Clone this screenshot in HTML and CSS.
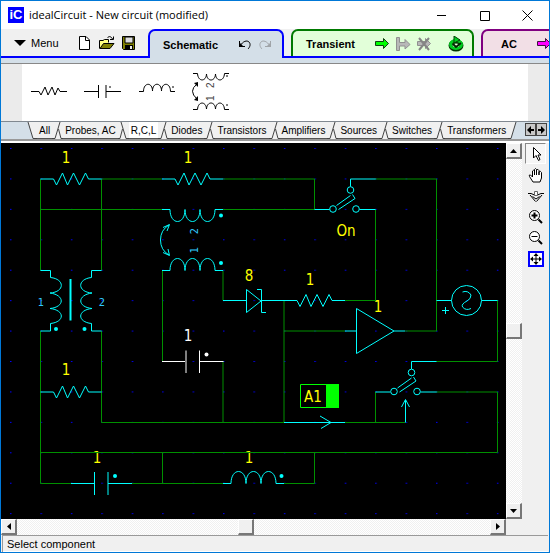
FILE: index.html
```html
<!DOCTYPE html>
<html lang="en">
<head>
<meta charset="utf-8">
<title>idealCircuit - New circuit (modified)</title>
<link rel="stylesheet" href="styles.css">
</head>
<body>
<svg class="defs" width="0" height="0" aria-hidden="true">
  <defs>
    <path id="resistor" d="M0 0H13L16 6L22 -6L27 6L33 -6L39 6L45 -6L48 0H61"/>
    <path id="coil-up" d="M0 0H8C8 -16 23 -16 23 0C23 -16 38 -16 38 0C38 -16 53 -16 53 0H61"/>
    <path id="coil-down" d="M0 0H8C8 16 23 16 23 0C23 16 38 16 38 0C38 16 53 16 53 0H61"/>
    <g id="switch">
      <path d="M0 0H15M45 0H61M36 -23V-30.500H61M22 -4L36 -14M24 0L40.500 -11L38 -15"/>
      <circle cx="18.500" cy="-.5" r="3.300"/><circle cx="36" cy="-19.500" r="3.300"/><circle cx="41.500" cy="-.5" r="3.300"/>
    </g>
  </defs>
</svg>
<div class="window">
  <header class="titlebar">
    <span class="logo">iC</span>
    <h1>idealCircuit - New circuit (modified)</h1>
    <div class="window-buttons">
      <button aria-label="Minimize"><svg width="11" height="11"><path d="M1 5.500H10" stroke="#000"/></svg></button>
      <button aria-label="Maximize"><svg width="11" height="11"><path d="M1.500 1.500H10.500V10.500H1.500Z" fill="none" stroke="#000"/></svg></button>
      <button aria-label="Close"><svg width="11" height="11"><path d="M.5 .5L10.500 10.500M10.500 .5L.5 10.500" stroke="#000"/></svg></button>
    </div>
  </header>

  <nav class="toolbar">
    <div class="file-tools">
      <button class="menu"><svg width="12" height="8"><path d="M0 1H12L6 7Z"/></svg>Menu</button>
      <button aria-label="New"><svg width="16" height="16"><path d="M2.500 1.500H9L12.500 5V14.500H2.500Z" fill="#fff" stroke="#000"/><path d="M8.500 1.500V5.500H12.500" fill="none" stroke="#000"/></svg></button>
      <button aria-label="Open"><svg width="16" height="16"><path d="M.5 13.500V5.500H4L5.500 4.500H9.500V7.500" fill="#ffff80" stroke="#000"/><path d="M1 13.500L4.500 8.500H15L11 13.500Z" fill="#808000" stroke="#000"/><path d="M8.500 3C9.500 1 12 1 13.500 4M14.500 1.500V4.500H11" fill="none" stroke="#000"/></svg></button>
      <button aria-label="Save"><svg width="16" height="16"><path d="M1.500 1.500H13.500V14.500H2.500L1.500 13.500Z" fill="#808000" stroke="#000"/><path d="M4 2H12V8H4Z" fill="#ddd" stroke="#000"/><path d="M4 10H12V14H4Z"/><path d="M9 11H11V14H9Z" fill="#eee"/></svg></button>
    </div>
    <section class="mode schematic">
      <button class="mode-name">Schematic</button>
      <button aria-label="Undo"><svg width="14" height="14"><path d="M1.500 3V8.500H7M2 8C5 3 9 2 11 4C13 6 12 9 10 11" fill="none" stroke="#000"/><path d="M1 4V9H6Z"/></svg></button>
      <button aria-label="Redo"><svg width="14" height="14"><path d="M12.500 3V8.500H7M12 8C9 3 5 2 3 4C1 6 2 9 4 11" fill="none" stroke="#a0a4a8"/><path d="M13 4V9H8Z" fill="#a0a4a8"/></svg></button>
    </section>
    <section class="mode transient">
      <button class="mode-name">Transient</button>
      <button aria-label="Run"><svg width="16" height="16"><path d="M1.500 5.500H9.500V2.500L14.500 7.500L9.500 12.500V9.500H1.500Z" fill="#0f0" stroke="#104010"/></svg></button>
      <button aria-label="Continue"><svg width="16" height="16"><path d="M1.500 1.500H4.500V6.500H10V3.500L15 8.500L10 13V10H4.500V14.500H1.500Z" fill="#b8b8b8" stroke="#909090"/></svg></button>
      <button aria-label="Stop"><svg width="16" height="16"><path d="M1.500 5.500H9.500V2.500L14.500 7.500L9.500 12.500V9.500H1.500Z" fill="#b8b8b8" stroke="#909090"/><path d="M3 2L13 14M13 2L3 14" stroke="#858585" stroke-width="2"/></svg></button>
      <button class="refresh" aria-label="Restart"><svg width="16" height="16"><ellipse cx="8" cy="9.500" rx="5.500" ry="4" fill="none" stroke="#003800" stroke-width="4"/><ellipse cx="8" cy="8.500" rx="5.500" ry="4" fill="none" stroke="#00d020" stroke-width="3"/><path d="M6 0L12 4L6 7Z" fill="#00d020" stroke="#004000"/><path d="M5 8L8 11L13 7" fill="none" stroke="#002800" stroke-width="2"/></svg></button>
    </section>
    <section class="mode ac">
      <button class="mode-name">AC</button>
      <button aria-label="Run AC"><svg width="16" height="16"><path d="M1.500 5.500H9.500V2.500L14.500 7.500L9.500 12.500V9.500H1.500Z" fill="#f0f" stroke="#401040"/></svg></button>
    </section>
  </nav>

  <div class="palette">
    <div class="parts">
      <button aria-label="Resistor"><svg width="38" height="44"><path d="M1 23.500H9L11 27L15 19L18 27L22 19L25 27L28 20L30 23.500H37"/></svg></button>
      <button aria-label="Capacitor"><svg width="38" height="44"><path d="M0 23.500H14.500M22 23.500H37M14.500 17V30M22 17V30"/><circle class="pin" cx="26" cy="19" r="1"/></svg></button>
      <button aria-label="Inductor"><svg width="38" height="44"><path d="M1 23.500H5.500C5.500 14 14.500 14 14.500 23C14.500 14 23.500 14 23.500 23C23.500 14 32.500 14 32.500 23.500H37"/><circle class="pin" cx="35" cy="19" r="1"/></svg></button>
      <button aria-label="Coupled inductors"><svg width="38" height="44"><path d="M1 5.500H5.500C6 14 14 14 14.500 6C15 14 23 14 23.500 6C24 14 32 14 32.500 5.500H37M1 41.500H5.500C6 33 14 33 14.500 41C15 33 23 33 23.500 41C24 33 32 33 32.500 41.500H37M5 16Q-4 23 5 31"/><path class="solid" d="M6 14V19L2 15ZM6 33V28L2 32Z"/><circle class="pin" cx="35" cy="8" r="1"/><circle class="pin" cx="35" cy="37" r="1"/><text x="-20" y="22" transform="rotate(-90)">2</text><text x="-33" y="22" transform="rotate(-90)">1</text></svg></button>
    </div>
  </div>

  <div class="categories">
    <svg class="edge" width="11" height="17"><path d="M2 0H11V16H7Z"/><path class="line" d="M2 0L7 16.500H11"/></svg>
    <button>All</button>
    <svg class="edge" width="11" height="17"><path d="M0 0H11V17H0Z"/><path class="line" d="M0 16.500H3L8 0M6.500 7L9 16.500H11"/></svg>
    <button>Probes, AC</button>
    <svg class="edge" width="11" height="17"><path d="M0 0H11V17H0Z"/><path class="line" d="M0 16.500H2L4.500 7M3 0L8 16.500H11"/></svg>
    <button class="current">R,C,L</button>
    <svg class="edge" width="11" height="17"><path d="M0 0H11V17H0Z"/><path class="line" d="M0 16.500H3L8 0M6.500 7L9 16.500H11"/></svg>
    <button>Diodes</button>
    <svg class="edge" width="11" height="17"><path d="M0 0H11V17H0Z"/><path class="line" d="M0 16.500H3L8 0M6.500 7L9 16.500H11"/></svg>
    <button>Transistors</button>
    <svg class="edge" width="11" height="17"><path d="M0 0H11V17H0Z"/><path class="line" d="M0 16.500H3L8 0M6.500 7L9 16.500H11"/></svg>
    <button>Amplifiers</button>
    <svg class="edge" width="11" height="17"><path d="M0 0H11V17H0Z"/><path class="line" d="M0 16.500H3L8 0M6.500 7L9 16.500H11"/></svg>
    <button>Sources</button>
    <svg class="edge" width="11" height="17"><path d="M0 0H11V17H0Z"/><path class="line" d="M0 16.500H3L8 0M6.500 7L9 16.500H11"/></svg>
    <button>Switches</button>
    <svg class="edge" width="11" height="17"><path d="M0 0H11V17H0Z"/><path class="line" d="M0 16.500H3L8 0M6.500 7L9 16.500H11"/></svg>
    <button>Transformers</button>
    <svg class="edge" width="11" height="17"><path d="M0 0H8L3 16H0Z"/><path class="line" d="M0 16.500H3L8 0"/></svg>
    <div class="pager">
      <button aria-label="Previous"><svg width="7" height="8"><path d="M0 4L4 0V3H7V5H4V8Z"/></svg></button>
      <button aria-label="Next"><svg width="7" height="8"><path d="M7 4L3 0V3H0V5H3V8Z"/></svg></button>
    </div>
  </div>

  <main class="workspace">
    <svg class="canvas" role="img" aria-label="Circuit">
      <defs>
        <pattern id="grid" x="9" y="5" width="30.430" height="30.430" patternUnits="userSpaceOnUse"><rect width="1.500" height="1" fill="#0000ff"/></pattern>
      </defs>
      <rect width="100%" height="100%" fill="#000"/>
      <rect width="100%" height="100%" fill="url(#grid)"/>
      <g transform="translate(-1 -143)">
        <g class="values">
          <text x="66" y="163">1</text>
          <text x="188" y="163">1</text>
          <text x="249" y="281">8</text>
          <text x="310" y="285">1</text>
          <text x="346" y="236">On</text>
          <text x="378" y="312">1</text>
          <text x="66" y="375">1</text>
          <text x="97" y="463">1</text>
          <text x="249" y="463">1</text>
          <text x="188" y="341" class="picked">1</text>
          <text x="313" y="402">A1</text>
        </g>
        <path class="wire" d="M40.500 179V270.500M101.500 179H162M101.500 179V270.500M40.500 209.500H162M223 179H314.500V209.500H223M375 179H436.500V331H405M375.500 209.500V300.500H345M284 300.500V422.500M284 331H345M162.500 270.500V361.500M223 270.500V300.500M223 361.500V422.500M40.500 331V483.500H71M101.500 331V422.500H284M345 422.500H405M375.500 392V422.500M497.500 300V361.500H436M436 392H497.500V452.500H40.500M162.500 452.500V483.500M132 483.500H223M314.500 452.500V483.500H284"/>
        <g class="part">
          <use href="#resistor" x="40.500" y="179"/>
          <use href="#resistor" x="162" y="179"/>
          <use href="#resistor" x="284" y="300.500"/>
          <use href="#resistor" x="40.500" y="392"/>
          <use href="#coil-down" x="162" y="209.500"/>
          <use href="#coil-up" x="162" y="270.500"/>
          <use href="#coil-up" x="223" y="483.500"/>
          <use href="#switch" x="314.500" y="209.500"/>
          <use href="#switch" x="375.500" y="392"/>
          <path d="M169 225Q160.500 230 160.500 240Q160.500 250 169 255M163 227.500L169.500 224.500L167 231M163 252.500L169.500 255.500L168 249"/>
          <path d="M40.500 270.500H50.500V277.500C65 279 65 292 50 293C65 295 65 307 50 308.500C65 310 65 322 50.500 323.500V331H40.500M101.500 270.500H91.500V277.500C77 279 77 292 92 293C77 295 77 307 92 308.500C77 310 77 322 91.500 323.500V331H101.500"/>
          <path class="core" d="M70.500 279V320.500"/>
          <path d="M223 300.500H246M246.500 289.500V312.500L261 301ZM257 289.500H261.500V312.500H266M262 300.500H284"/>
          <path d="M436.500 300.500H451.500M481.500 300.500H497.500M462.500 292Q468 290 471 295Q471 299 467 301Q461 304 462.500 307Q466 311 471 308.500M442 310.500H449M445.500 307V314"/>
          <circle cx="466.500" cy="300.500" r="15"/>
          <path d="M345 331H356.500M356.500 308.500V353.500L394 331ZM394 331H405"/>
          <path d="M284 422.500H345M320 416L331 422.500L321 428.500M405.500 422.500V400M401.500 407L405.500 399.500L409.500 407"/>
          <path d="M71 483.500H94M94.500 472V495M108 472V495M108 483.500H132"/>
        </g>
        <g class="dots"><circle cx="221" cy="215.500" r="2"/><circle cx="221" cy="263" r="2"/><circle cx="56" cy="329" r="2"/><circle cx="84.500" cy="329" r="2"/><circle cx="115" cy="476" r="2"/><circle cx="281.500" cy="476" r="2"/></g>
        <g class="windings"><text x="41" y="306">1</text><text x="102" y="306">2</text><text x="-231" y="198" transform="rotate(-90)">2</text><text x="-250" y="198" transform="rotate(-90)">1</text></g>
        <path class="selected" d="M162 361.500H185M186 350.500V373M199.500 350.500V373M200 361.500H223.500"/>
        <circle cx="206.500" cy="354.500" r="2" fill="#fff"/>
        <path d="M300.500 384.500H338.500V407.500H300.500Z" fill="none" stroke="#0f0"/>
        <path d="M326 384H339V408H326Z" fill="#0f0"/>
      </g>
    </svg>
    <div class="scroll vertical">
      <button aria-label="Scroll up"><svg width="7" height="4"><path d="M0 4L3.500 0L7 4Z"/></svg></button>
      <span class="before"></span><button aria-label="Vertical position"></button><span class="after"></span>
      <button aria-label="Scroll down"><svg width="7" height="4"><path d="M0 0L3.500 4L7 0Z"/></svg></button>
    </div>
    <div class="scroll horizontal">
      <button aria-label="Scroll left"><svg width="4" height="7"><path d="M4 0L0 3.500L4 7Z"/></svg></button>
      <span class="before"></span><button aria-label="Horizontal position"></button><span class="after"></span>
      <button aria-label="Scroll right"><svg width="4" height="7"><path d="M0 0L4 3.500L0 7Z"/></svg></button>
    </div>
    <aside class="tools">
      <button class="active" aria-label="Select"><svg width="16" height="16"><path d="M5.500 1.500V12L8 9.500L10.500 14.500L12 13.500L10 9H13Z" fill="#fff" stroke="#000"/></svg></button>
      <button aria-label="Pan"><svg width="16" height="16"><path d="M5 15L1.500 9.500Q.5 7.500 2.500 8L4.500 10V4Q5.500 2.500 6.500 4V8V2.500Q7.500 .5 8.500 2.500V8V3Q10 1.500 11 3.500V8V5Q12.500 3.500 13.500 5.500V11L12 15Z" fill="#fff" stroke="#000"/></svg></button>
      <button aria-label="Probe"><svg width="16" height="16"><path d="M0 5.500H3L6.500 7M16 5.500H13L9.500 7M2 7L7.500 13.500M14 7L8.500 13.500M4.500 8.500L8 11L11.500 8.500" fill="none" stroke="#000"/><path d="M6.500 3.500H9.500V7.500H6.500Z" fill="#fff" stroke="#666"/></svg></button>
      <button aria-label="Zoom in"><svg width="16" height="16"><circle cx="6.500" cy="6.500" r="5" fill="#fff" stroke="#000"/><path d="M3.500 6.500H9.500M6.500 3.500V9.500" stroke="#000" stroke-width="2"/><path d="M10.500 10.500L14 14" stroke="#000" stroke-width="2"/></svg></button>
      <button aria-label="Zoom out"><svg width="16" height="16"><circle cx="6.500" cy="6.500" r="5" fill="#fff" stroke="#000"/><path d="M3.500 6.500H9.500" stroke="#000"/><path d="M10.500 10.500L14 14" stroke="#000" stroke-width="2"/></svg></button>
      <button aria-label="Zoom to fit"><svg width="16" height="16"><path d="M1 1H15V15H1Z" fill="#fff" stroke="#00f" stroke-width="2"/><path d="M8 3V13M3 8H13" stroke="#000"/><path d="M8 2L10.500 5H5.500ZM8 14L10.500 11H5.500ZM2 8L5 5.500V10.500ZM14 8L11 5.500V10.500Z"/></svg></button>
    </aside>
  </main>
  <footer class="status">Select component</footer>
</div>
</body>
</html>
```
FILE: styles.css
```css
* { box-sizing: border-box; }
body { margin: 0; }
svg { display: block; flex: none; }
.defs { position: absolute; }
button { margin: 0; padding: 0; border: 0; background: none; color: inherit; font: inherit; flex: none; }

.window {
  display: flex;
  flex-direction: column;
  height: 100vh;
  border: 1px solid #0078d7;
  background: #f0f0f0;
  color: #000;
  font: 11px/16px "Liberation Sans", sans-serif;
  overflow: hidden;
}

.titlebar { display: flex; align-items: center; flex: none; height: 28px; padding-left: 7px; background: #fff; }
.logo { width: 16px; height: 16px; background: #00f; color: #fff; font: bold 13px/16px "Liberation Sans", sans-serif; text-align: center; }
.titlebar h1 { flex: 1; margin: 0 0 0 5px; font: 11px/16px "Open Sans", sans-serif; }
.window-buttons { display: flex; }
.window-buttons button { display: flex; justify-content: center; width: 43px; }

.toolbar {
  display: flex;
  align-items: flex-start;
  flex: none;
  height: 29px;
  overflow: hidden;
  box-shadow: inset 0 -2px #00f;
}
.file-tools { display: flex; align-items: center; flex: none; gap: 6px; width: 147px; height: 28px; padding-left: 13px; }
.menu { display: flex; align-items: center; gap: 5px; margin-right: 12px; }
.mode { display: flex; align-items: center; flex: none; gap: 5px; height: 27px; padding-left: 13px; border: 2px solid; border-bottom: 0; border-radius: 7px 7px 0 0; margin-right: 7px; }
.mode-name { font-weight: bold; margin-right: 14px; }
.schematic { width: 136px; height: 29px; gap: 6px; border-color: #00f; background: #d4dfe8; }
.transient { width: 183px; border-color: #007a00; background: #e2ffd9; }
.refresh { margin-left: 11px; }
.ac { width: 183px; padding-left: 18px; border-color: #800080; background: #f2dfe6; }

.palette { flex: none; height: 63px; padding: 1px 21px 0; border-top: 5px solid #d4dfe8; background: #ebebeb; box-shadow: inset 0 1px #888; }
.parts { display: flex; align-items: flex-start; gap: 16px; height: 57px; padding: 4px 8px 0; background: #fff; }
.palette path { fill: none; stroke: #000; }
.palette .solid { fill: #000; stroke: none; }
.palette .pin { fill: #555; }
.palette text { font-size: 10px; fill: #444; }

.categories { display: flex; flex: none; align-items: flex-start; height: 18px; padding-left: 25px; background: #d4dfe8; border-top: 1px solid #808890; font-size: 10px; }
.categories > button { height: 17px; padding: 0 2px; background: #f0f0f0; border-bottom: 1px solid #555; line-height: 15px; }
.edge path { fill: #f0f0f0; }
.edge .line { fill: none; stroke: #444; }
.categories > .current { background: #fff; }
.pager { display: flex; margin: 1px 2px 0 auto; }
.pager button { display: flex; align-items: center; justify-content: center; width: 11px; height: 13px; border: 1px solid #444; background: #c8c8c8; }

.workspace {
  display: grid;
  grid-template: minmax(0, 1fr) 16px / minmax(0, 1fr) 16px 27px;
  flex: 1;
  min-height: 0;
  border-top: 2px solid #999;
  box-shadow: inset 0 2px #fff;
  padding-top: 2px;
}
.canvas { width: 100%; height: 100%; }
.wire { fill: none; stroke: #009000; }
.part { fill: none; stroke: #00ffff; }
.core { stroke-width: 2; }
.dots { fill: #00ffff; }
.selected { fill: none; stroke: #fff; }
.values { font: 15px "DejaVu Sans Condensed", "DejaVu Sans", sans-serif; fill: #ff0; text-anchor: middle; }
.values .picked { fill: #fff; }
.windings { font: 11px "DejaVu Sans Condensed", "DejaVu Sans", sans-serif; fill: #30c8ff; text-anchor: middle; }

.scroll { display: flex; background: repeating-conic-gradient(#fff 0 25%, #f0f0f0 0 50%) 0 0 / 2px 2px; }
.vertical { flex-direction: column; }
.horizontal { grid-row: 2; grid-column: 1; }
.scroll button { display: flex; align-items: center; justify-content: center; width: 16px; height: 16px; background: #f0f0f0; border: solid; border-width: 1px 2px 2px 1px; border-color: #fff #777 #777 #fff; }
.before { flex: 47; }
.after { flex: 50; }
.vertical .after { flex: 47; }

.tools { grid-column: 3; grid-row: 1 / 3; display: flex; flex-direction: column; align-items: center; }
.tools button { display: flex; align-items: center; justify-content: center; width: 21px; height: 21px; }
.tools .active { border: 1px solid; border-color: #888 #fff #fff #888; background: #f6f6f6; }

.status { flex: none; height: 17px; margin: 0 1px; padding-left: 4px; border: 1px solid #999; border-width: 1px 0 0 1px; box-shadow: inset 0 -1px #fff; line-height: 16px; }
```
